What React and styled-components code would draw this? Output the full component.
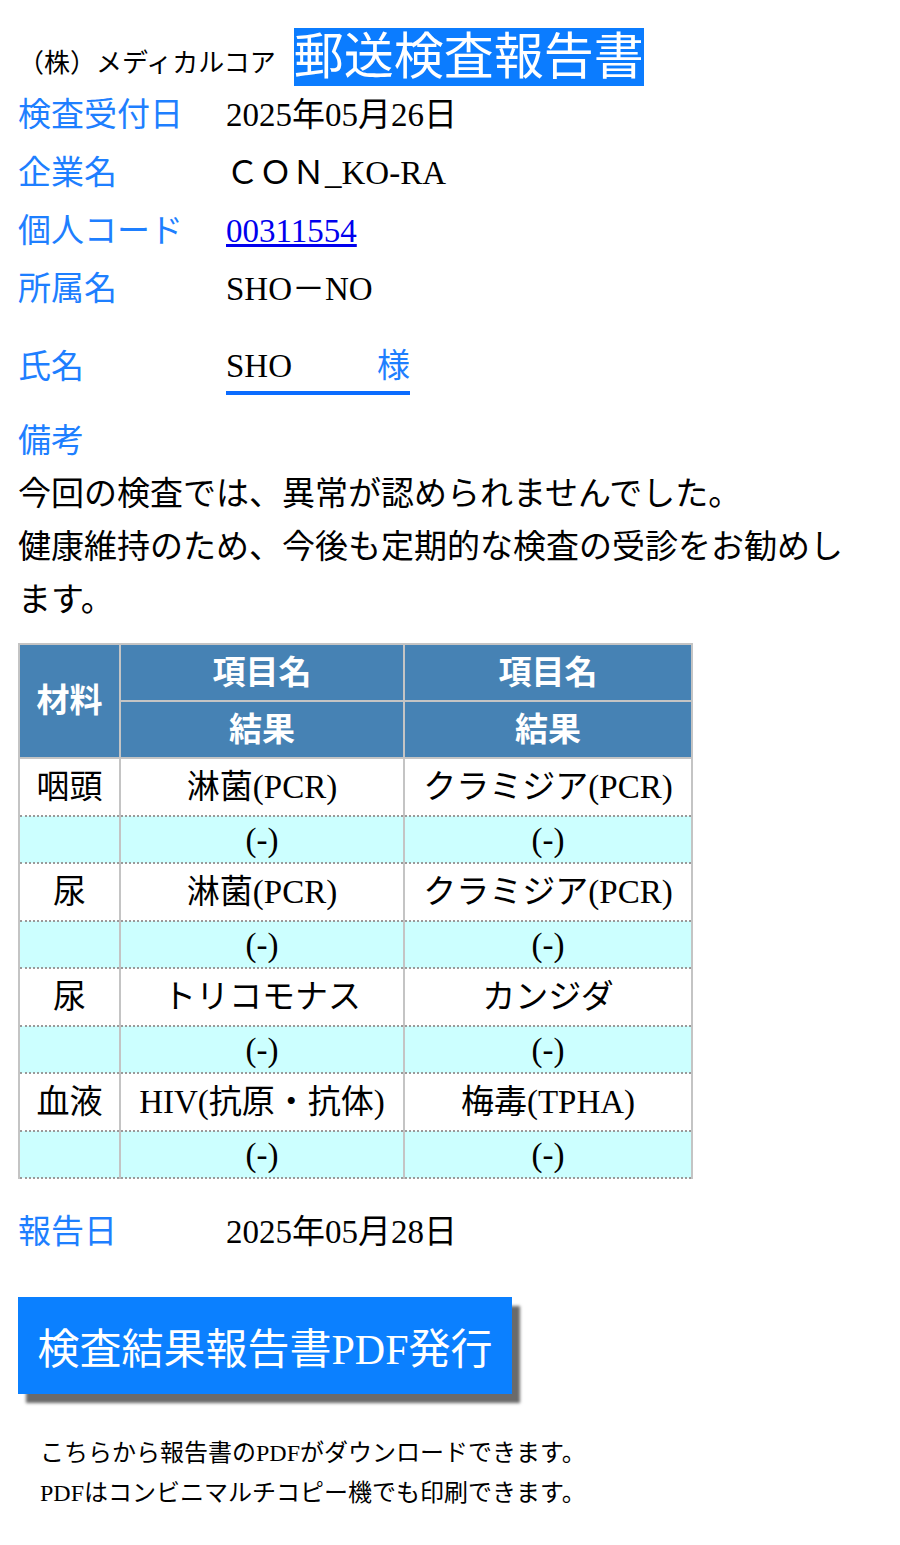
import React from "react";
import styled, { createGlobalStyle } from "styled-components";

const Global = createGlobalStyle`
  html, body { margin: 0; padding: 0; background: #fff; }
  body {
    font-family: "Liberation Serif", "Noto Sans CJK JP", serif;
    color: #000;
  }
`;

const Page = styled.div`
  width: 900px;
  box-sizing: border-box;
  padding: 28px 18px 40px;
`;

const Header = styled.div`
  display: flex;
  align-items: flex-end;
  gap: 18px;
`;

const Company = styled.span`
  font-size: 26px;
  line-height: 26px;
  margin-bottom: 9px;
`;

const Title = styled.h1`
  margin: 0;
  font-weight: normal;
  font-size: 50px;
  line-height: 58px;
  background: #0b7cff;
  color: #fff;
`;

const FieldRow = styled.div`
  display: grid;
  grid-template-columns: 208px 1fr;
  align-items: ${(p) => (p.$end ? "end" : "center")};
  height: ${(p) => p.$h}px;
  font-size: 33px;
  line-height: ${(p) => p.$lh || 58}px;
`;

const Label = styled.div`
  color: #1e7fff;
`;

const NameLabel = styled(Label)`
  padding-bottom: 3px;
`;

const Value = styled.div`
  color: #000;
`;

const Code = styled.a`
  color: #0000ee;
  text-decoration: underline;
`;

const NameBox = styled.div`
  width: 184px;
  display: flex;
  justify-content: space-between;
  border-bottom: 4px solid #0b6cff;
  line-height: 50px;
`;

const Sama = styled.span`
  color: #1e7fff;
`;

const NoteLabel = styled.div`
  margin-top: 20px;
  font-size: 33px;
  line-height: 53px;
  color: #1e7fff;
`;

const Note = styled.p`
  margin: 0;
  max-width: 840px;
  font-size: 33px;
  line-height: 53px;
`;

const Table = styled.table`
  margin-top: 16px;
  border-collapse: collapse;
  width: 673px;
  table-layout: fixed;
  font-size: 33px;
  text-align: center;
`;

const Th = styled.th`
  background: #4682b4;
  color: #fff;
  font-weight: bold;
  border: 2px solid #c4c4c4;
  height: 55px;
  padding: 0;
  line-height: 40px;
`;

const Td = styled.td`
  background: ${(p) => (p.$result ? "#ccffff" : "#fff")};
  border-left: 2px solid #c4c4c4;
  border-right: 2px solid #c4c4c4;
  border-bottom: 2px dotted #9a9a9a;
  height: ${(p) => (p.$result ? 45 : 56)}px;
  padding: 0;
  line-height: 40px;
  white-space: nowrap;
`;

const ReportRow = styled(FieldRow)`
  margin-top: 24px;
`;

const PdfButton = styled.button`
  margin-top: 36px;
  display: block;
  width: 494px;
  height: 97px;
  border: none;
  padding: 0;
  background: #0b80ff;
  color: #fff;
  font-family: inherit;
  font-size: 42px;
  box-shadow: 8px 9px 3px #6a6a6a;
  cursor: pointer;
`;

const Footnote = styled.div`
  margin-top: 39px;
  padding-left: 22px;
  font-size: 24px;
  line-height: 40px;
`;

const tests = [
  { mat: "咽頭", a: "淋菌(PCR)", b: "クラミジア(PCR)" },
  { mat: "尿", a: "淋菌(PCR)", b: "クラミジア(PCR)" },
  { mat: "尿", a: "トリコモナス", b: "カンジダ" },
  { mat: "血液", a: "HIV(抗原・抗体)", b: "梅毒(TPHA)" },
];

export default function App() {
  return (
    <Page>
      <Global />
      <Header>
        <Company>（株）メディカルコア</Company>
        <Title>郵送検査報告書</Title>
      </Header>

      <FieldRow $h={58}>
        <Label>検査受付日</Label>
        <Value>2025年05月26日</Value>
      </FieldRow>
      <FieldRow $h={58}>
        <Label>企業名</Label>
        <Value>ＣＯＮ_KO-RA</Value>
      </FieldRow>
      <FieldRow $h={58}>
        <Label>個人コード</Label>
        <Value>
          <Code href="#">00311554</Code>
        </Value>
      </FieldRow>
      <FieldRow $h={58}>
        <Label>所属名</Label>
        <Value>SHO－NO</Value>
      </FieldRow>
      <FieldRow $h={77} $lh={50} $end>
        <NameLabel>氏名</NameLabel>
        <NameBox>
          <span>SHO</span>
          <Sama>様</Sama>
        </NameBox>
      </FieldRow>

      <NoteLabel>備考</NoteLabel>
      <Note>
        今回の検査では、異常が認められませんでした。
        <br />
        健康維持のため、今後も定期的な検査の受診をお勧めします。
      </Note>

      <Table>
        <colgroup>
          <col style={{ width: 101 }} />
          <col style={{ width: 284 }} />
          <col style={{ width: 288 }} />
        </colgroup>
        <thead>
          <tr>
            <Th rowSpan={2}>材料</Th>
            <Th>項目名</Th>
            <Th>項目名</Th>
          </tr>
          <tr>
            <Th>結果</Th>
            <Th>結果</Th>
          </tr>
        </thead>
        <tbody>
          {tests.map((t, i) => (
            <React.Fragment key={i}>
              <tr>
                <Td>{t.mat}</Td>
                <Td>{t.a}</Td>
                <Td>{t.b}</Td>
              </tr>
              <tr>
                <Td $result></Td>
                <Td $result>(-)</Td>
                <Td $result>(-)</Td>
              </tr>
            </React.Fragment>
          ))}
        </tbody>
      </Table>

      <ReportRow $h={58}>
        <Label>報告日</Label>
        <Value>2025年05月28日</Value>
      </ReportRow>

      <PdfButton type="button">検査結果報告書PDF発行</PdfButton>

      <Footnote>
        こちらから報告書のPDFがダウンロードできます。
        <br />
        PDFはコンビニマルチコピー機でも印刷できます。
      </Footnote>
    </Page>
  );
}
